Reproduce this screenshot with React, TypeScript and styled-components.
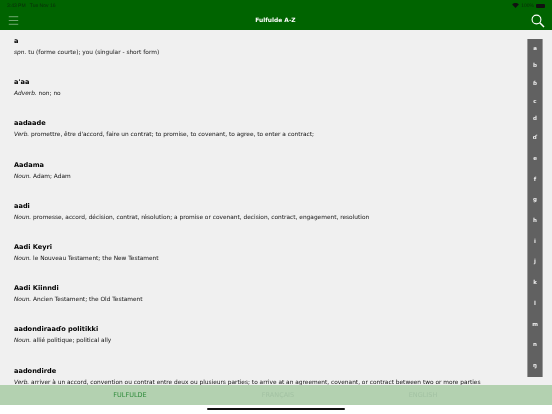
import * as React from 'react';
import styled, { createGlobalStyle } from 'styled-components';
import { Menu } from 'lucide-react';

const GlobalStyle = createGlobalStyle`
  html, body {
    margin: 0;
    padding: 0;
    background: #fff;
  }
  body {
    font-family: "DejaVu Sans", Verdana, sans-serif;
    text-rendering: geometricPrecision;
  }
`;

const entries = [
  { word: 'a', pos: 'spn.', text: 'tu (forme courte); you (singular - short form)' },
  { word: "a'aa", pos: 'Adverb.', text: 'non; no' },
  { word: 'aadaade', pos: 'Verb.', text: "promettre, être d'accord, faire un contrat; to promise, to covenant, to agree, to enter a contract;" },
  { word: 'Aadama', pos: 'Noun.', text: 'Adam; Adam' },
  { word: 'aadi', pos: 'Noun.', text: 'promesse, accord, décision, contrat, résolution; a promise or covenant, decision, contract, engagement, resolution' },
  { word: 'Aadi Keyri', pos: 'Noun.', text: 'le Nouveau Testament; the New Testament' },
  { word: 'Aadi Kiinndi', pos: 'Noun.', text: 'Ancien Testament; the Old Testament' },
  { word: 'aadondiraaɗo politikki', pos: 'Noun.', text: 'allié politique; political ally' },
  { word: 'aadondirde', pos: 'Verb.', text: 'arriver à un accord, convention ou contrat entre deux ou plusieurs parties; to arrive at an agreement, covenant, or contract between two or more parties' },
];

const letters = ['a', 'b', 'ɓ', 'c', 'd', 'ɗ', 'e', 'f', 'g', 'h', 'i', 'j', 'k', 'l', 'm', 'n', 'ŋ'];

export default function App() {
  return (
    <Page>
      <GlobalStyle />
      <Header>
        <StatusBar>
          <span>3:43 PM&nbsp;&nbsp;&nbsp;Tue Nov 16</span>
          <StatusRight>
            <svg width="7" height="5" viewBox="0 0 16 12">
              <path d="M8 12 0 3.5C4.5-1 11.5-1 16 3.5Z" fill="#111" />
            </svg>
            <span>100%</span>
            <Battery />
          </StatusRight>
        </StatusBar>
        <Toolbar>
          <Menu size={13} strokeWidth={1} color="#cfe3cf" />
          <Title>Fulfulde A-Z</Title>
          <svg width="14" height="14" viewBox="0 0 14 14" fill="none" stroke="#fff">
            <circle cx="5.5" cy="5.5" r="4.4" strokeWidth="1.1" />
            <path d="M8.8 8.8 13 13" strokeWidth="1.5" />
          </svg>
        </Toolbar>
      </Header>
      <Main>
        <EntryList>
          {entries.map(entry => (
            <Entry key={entry.word}>
              <Word>{entry.word}</Word>
              <Definition><em>{entry.pos}</em> {entry.text}</Definition>
            </Entry>
          ))}
        </EntryList>
        <IndexBar>
          {letters.map((letter, i) => <IndexLetter key={letter} $compact={i < 5}>{letter}</IndexLetter>)}
        </IndexBar>
      </Main>
      <Tabs>
        <Tab $active>FULFULDE</Tab>
        <Tab>FRANÇAIS</Tab>
        <Tab>ENGLISH</Tab>
      </Tabs>
      <HomeArea>
        <HomeIndicator />
      </HomeArea>
    </Page>
  );
}

const Page = styled.div`
  width: 552px;
  height: 414px;
  display: flex;
  flex-direction: column;
  overflow: hidden;
  filter: blur(0.2px);
`;

const Header = styled.header`
  height: 30px;
  flex-shrink: 0;
  background: #006400;
  display: flex;
  flex-direction: column;
`;

const StatusBar = styled.div`
  height: 11px;
  padding: 0 7px;
  display: flex;
  align-items: center;
  justify-content: space-between;
  font-family: "Liberation Sans", sans-serif;
  font-size: 5px;
  color: #0b2a0b;
`;

const StatusRight = styled.div`
  display: flex;
  align-items: center;
  gap: 2px;
`;

const Battery = styled.div`
  width: 9px;
  height: 4px;
  background: #111;
  border-radius: 1px;
`;

const Toolbar = styled.div`
  flex: 1;
  padding: 0 7px;
  display: flex;
  align-items: center;
  justify-content: space-between;
`;

const Title = styled.div`
  font-size: 5.9px;
  font-weight: 700;
  color: #fff;
`;

const Main = styled.main`
  height: 355px;
  flex-shrink: 0;
  background: #f0f0f0;
  display: flex;
  overflow: hidden;
`;

const EntryList = styled.div`
  flex: 1;
  min-width: 0;
  padding: 6px 0 0 14px;
`;

const Entry = styled.div`
  height: 41.2px;
  white-space: nowrap;
`;

const Word = styled.div`
  height: 10px;
  line-height: 10px;
  font-size: 6.6px;
  font-weight: 700;
  color: #000;
`;

const Definition = styled.div`
  margin-top: 2px;
  line-height: 10px;
  font-size: 5.85px;
  color: #111;
`;

const IndexBar = styled.nav`
  width: 16px;
  height: 338px;
  margin: 9px 9px 0 0;
  padding-top: 1px;
  flex-shrink: 0;
  background: #616161;
  border: 0 solid #999;
  border-width: 0 1px;
  box-sizing: border-box;
  display: flex;
  flex-direction: column;
  align-items: center;
  font-size: 5.5px;
  font-weight: 700;
  color: #eee;
`;

const IndexLetter = styled.span<{ $compact?: boolean }>`
  flex-shrink: 0;
  height: ${p => (p.$compact ? '17.6px' : '20.7px')};
  display: flex;
  align-items: center;
`;

const Tabs = styled.div`
  height: 20px;
  flex-shrink: 0;
  background: #b3d1b0;
  display: grid;
  grid-template-columns: 260px 36px 254px;
`;

const Tab = styled.div<{ $active?: boolean }>`
  display: flex;
  align-items: center;
  justify-content: center;
  font-size: 6.5px;
  color: ${p => (p.$active ? '#2e8b3a' : '#a3c2a3')};
`;

const HomeArea = styled.div`
  height: 9px;
  flex-shrink: 0;
  background: #fff;
  display: flex;
  justify-content: center;
  padding-top: 3px;
  box-sizing: border-box;
`;

const HomeIndicator = styled.div`
  width: 138px;
  height: 2px;
  background: #111;
  border-radius: 1px;
`;
